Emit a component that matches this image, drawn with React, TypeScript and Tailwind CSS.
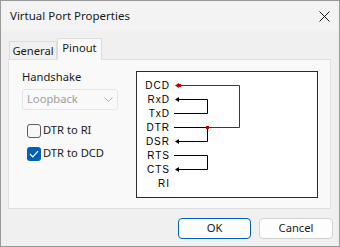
import React from "react";

const rows = ["DCD", "RxD", "TxD", "DTR", "DSR", "RTS", "CTS", "RI"];

function Arrow({ y, color = "#000" }: { y: number; color?: string }) {
  return <polygon points={`38,${y} 42,${y - 2.5} 42,${y + 2.5}`} fill={color} />;
}

function Diagram() {
  const yc = (i: number) => 13.5 + i * 14;
  const red = "#c00000";
  return (
    <div className="w-[182px] h-[127px] border border-[#2b2b2b] bg-white">
      <svg width="180" height="125" viewBox="0 0 180 125" className="block">
        {rows.map((r, i) => (
          <text
            key={r}
            x={33}
            y={yc(i) + 3.5}
            textAnchor="end"
            fontFamily="'Liberation Sans', Arial, sans-serif"
            fontSize="10"
            letterSpacing="1"
            fill="#000"
          >
            {r}
          </text>
        ))}
        <polyline points={`40,${yc(0)} 102.5,${yc(0)} 102.5,${yc(3)} 70.5,${yc(3)}`} fill="none" stroke={red} strokeWidth="1" />
        <Arrow y={yc(0)} color={red} />
        <rect x={41} y={yc(0) - 1.5} width={3} height={3} fill={red} />
        <polyline points={`37,${yc(2)} 70.5,${yc(2)} 70.5,${yc(1)} 40,${yc(1)}`} fill="none" stroke="#000" strokeWidth="1" />
        <Arrow y={yc(1)} />
        <polyline points={`37,${yc(3)} 70.5,${yc(3)} 70.5,${yc(4)} 40,${yc(4)}`} fill="none" stroke="#000" strokeWidth="1" />
        <Arrow y={yc(4)} />
        <rect x={69} y={yc(3) - 1.5} width={3} height={3} fill={red} />
        <polyline points={`37,${yc(5)} 70.5,${yc(5)} 70.5,${yc(6)} 40,${yc(6)}`} fill="none" stroke="#000" strokeWidth="1" />
        <Arrow y={yc(6)} />
      </svg>
    </div>
  );
}

export default function App() {
  return (
    <div
      className="w-[340px] h-[247px] border border-[#9a9a9a] bg-[#f0f0f0] flex flex-col text-[11.2px] text-black"
      style={{ fontFamily: "'Noto Sans', sans-serif" }}
    >
      <div className="h-[30px] bg-[#f3f3f3] flex items-center justify-between pl-[9px] pr-[9px] shrink-0">
        <span className="text-[#1a1a1a] text-[11.5px]">Virtual Port Properties</span>
        <svg width="11" height="11" viewBox="0 0 11 11">
          <path d="M0.5 0.5 L10.5 10.5 M10.5 0.5 L0.5 10.5" stroke="#1a1a1a" strokeWidth="1" />
        </svg>
      </div>
      <div className="flex flex-col pt-[7px] flex-1">
        <div className="flex items-end ml-[8px] h-[21px] relative z-10">
          <div className="h-[18px] w-[48px] border border-b-0 border-[#dcdcdc] bg-[#f0f0f0] flex items-center justify-center text-[#1a1a1a] pt-[1px]">
            General
          </div>
          <div className="h-[22px] w-[45px] border border-b-0 border-[#dcdcdc] bg-[#f9f9f9] flex items-center justify-center -mb-[1px] pb-[2px] text-[#1a1a1a]">
            Pinout
          </div>
        </div>
        <div className="ml-[7px] w-[323px] h-[150px] border border-[#e0e0e0] bg-[#f9f9f9] flex">
          <div className="w-[114px] ml-[13px] pt-[9px] flex flex-col">
            <div className="h-[16px] leading-[16px] text-[#1a1a1a]">Handshake</div>
            <div className="mt-[4px] w-[96px] h-[21px] border border-[#e5e5e5] rounded-[3px] bg-[#f9f9f9] flex items-center justify-between pl-[4px] pr-[4px] text-[#a0a0a0]">
              <span>Loopback</span>
              <svg width="9" height="6" viewBox="0 0 9 6">
                <path d="M0.5 0.5 L4.5 4.5 L8.5 0.5" fill="none" stroke="#b0b0b0" strokeWidth="1" />
              </svg>
            </div>
            <label className="mt-[13px] ml-[5px] flex items-center h-[15px] gap-[2px] text-[#1a1a1a]">
              <span className="w-[14px] h-[14px] rounded-[3px] border border-[#5c5c5c] bg-[#f7f7f7] shrink-0" />
              <span>DTR to RI</span>
            </label>
            <label className="mt-[8px] ml-[5px] flex items-center h-[15px] gap-[2px] text-[#1a1a1a]">
              <span className="w-[14px] h-[14px] rounded-[3px] bg-[#005fb8] shrink-0 flex items-center justify-center">
                <svg width="10" height="8" viewBox="0 0 10 8">
                  <path d="M1 4 L3.8 6.8 L9 1.2" fill="none" stroke="#fff" strokeWidth="1.2" />
                </svg>
              </span>
              <span>DTR to DCD</span>
            </label>
          </div>
          <div className="pt-[11px]">
            <Diagram />
          </div>
        </div>
        <div className="flex justify-end gap-[8px] mt-[9px] mr-[6px]">
          <button className="w-[73px] h-[21px] rounded-[4px] border border-[#005fb8] bg-[#fdfdfd] text-[#1a1a1a] flex items-center justify-center">
            OK
          </button>
          <button className="w-[74px] h-[21px] rounded-[4px] border border-[#d0d0d0] bg-[#fdfdfd] text-[#1a1a1a] flex items-center justify-center">
            Cancel
          </button>
        </div>
      </div>
    </div>
  );
}
